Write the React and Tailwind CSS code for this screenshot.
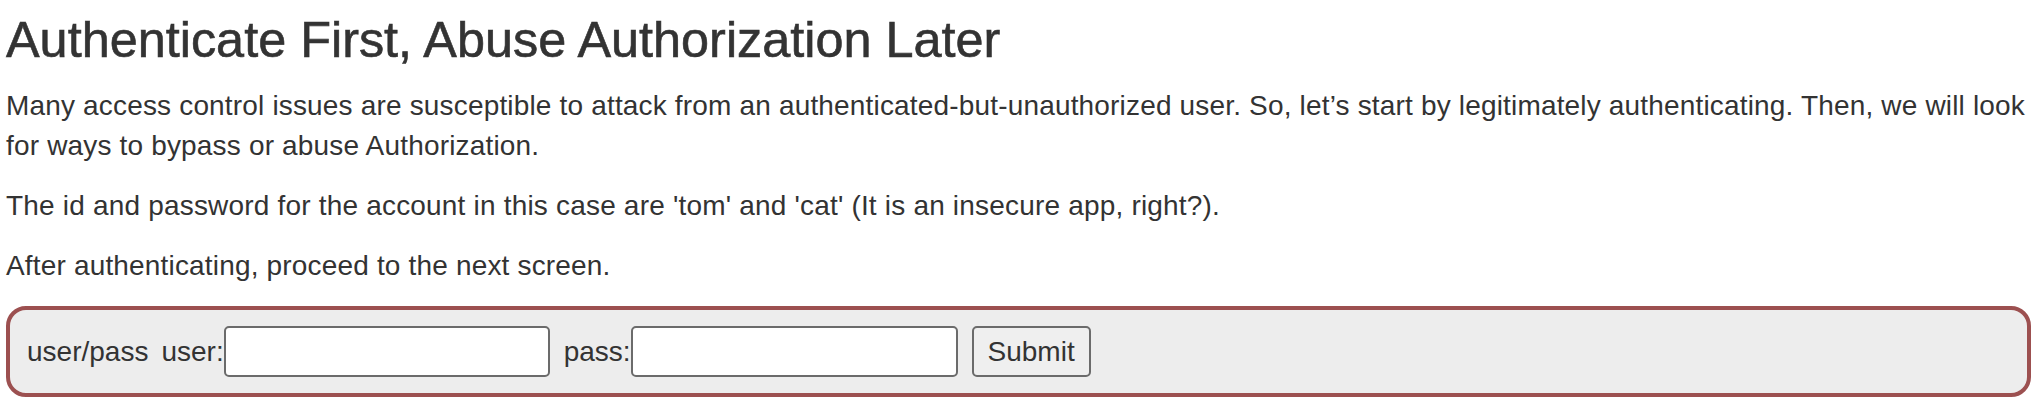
export default function App() {
  return (
    <div className="bg-white pl-[6px] pr-[11px] pt-[13px] text-[#333] font-['Liberation_Sans',Arial,sans-serif]">
      <h3 className="m-0 mb-[20px] text-[50.4px] leading-[53px] font-normal [-webkit-text-stroke:0.6px_#333]">
        Authenticate First, Abuse Authorization Later
      </h3>
      <p className="m-0 mb-[20px] text-[28px] leading-[40px] tracking-[0.17px]">
        Many access control issues are susceptible to attack from an authenticated-but-unauthorized user. So, let’s start by legitimately authenticating. Then, we will look for ways to bypass or abuse Authorization.
      </p>
      <p className="m-0 mb-[20px] text-[28px] leading-[40px] tracking-[0.19px]">
        The id and password for the account in this case are 'tom' and 'cat' (It is an insecure app, right?).
      </p>
      <p className="m-0 mb-[20px] text-[28px] leading-[40px] tracking-[0.17px]">
        After authenticating, proceed to the next screen.
      </p>
      <form
        className="flex items-center border-[4px] border-[#9c5050] rounded-[20px] bg-[#ededed] px-[17px] py-[16px] text-[28px] leading-[40px]"
        onSubmit={(e) => e.preventDefault()}
      >
        <span className="mr-[13px]">user/pass</span>
        <label className="flex items-center">
          <span>user:</span>
          <input
            type="text"
            className="w-[326px] h-[51px] bg-white border-2 border-[#6b6b6b] rounded-[5px] px-2 outline-none"
          />
        </label>
        <label className="flex items-center ml-[14px]">
          <span>pass:</span>
          <input
            type="password"
            className="w-[327px] h-[51px] bg-white border-2 border-[#6b6b6b] rounded-[5px] px-2 outline-none"
          />
        </label>
        <button
          type="submit"
          className="ml-[14px] w-[119px] h-[51px] bg-[#efefef] border-2 border-[#6b6b6b] rounded-[5px] text-[28px] text-[#333]"
        >
          Submit
        </button>
      </form>
    </div>
  );
}
